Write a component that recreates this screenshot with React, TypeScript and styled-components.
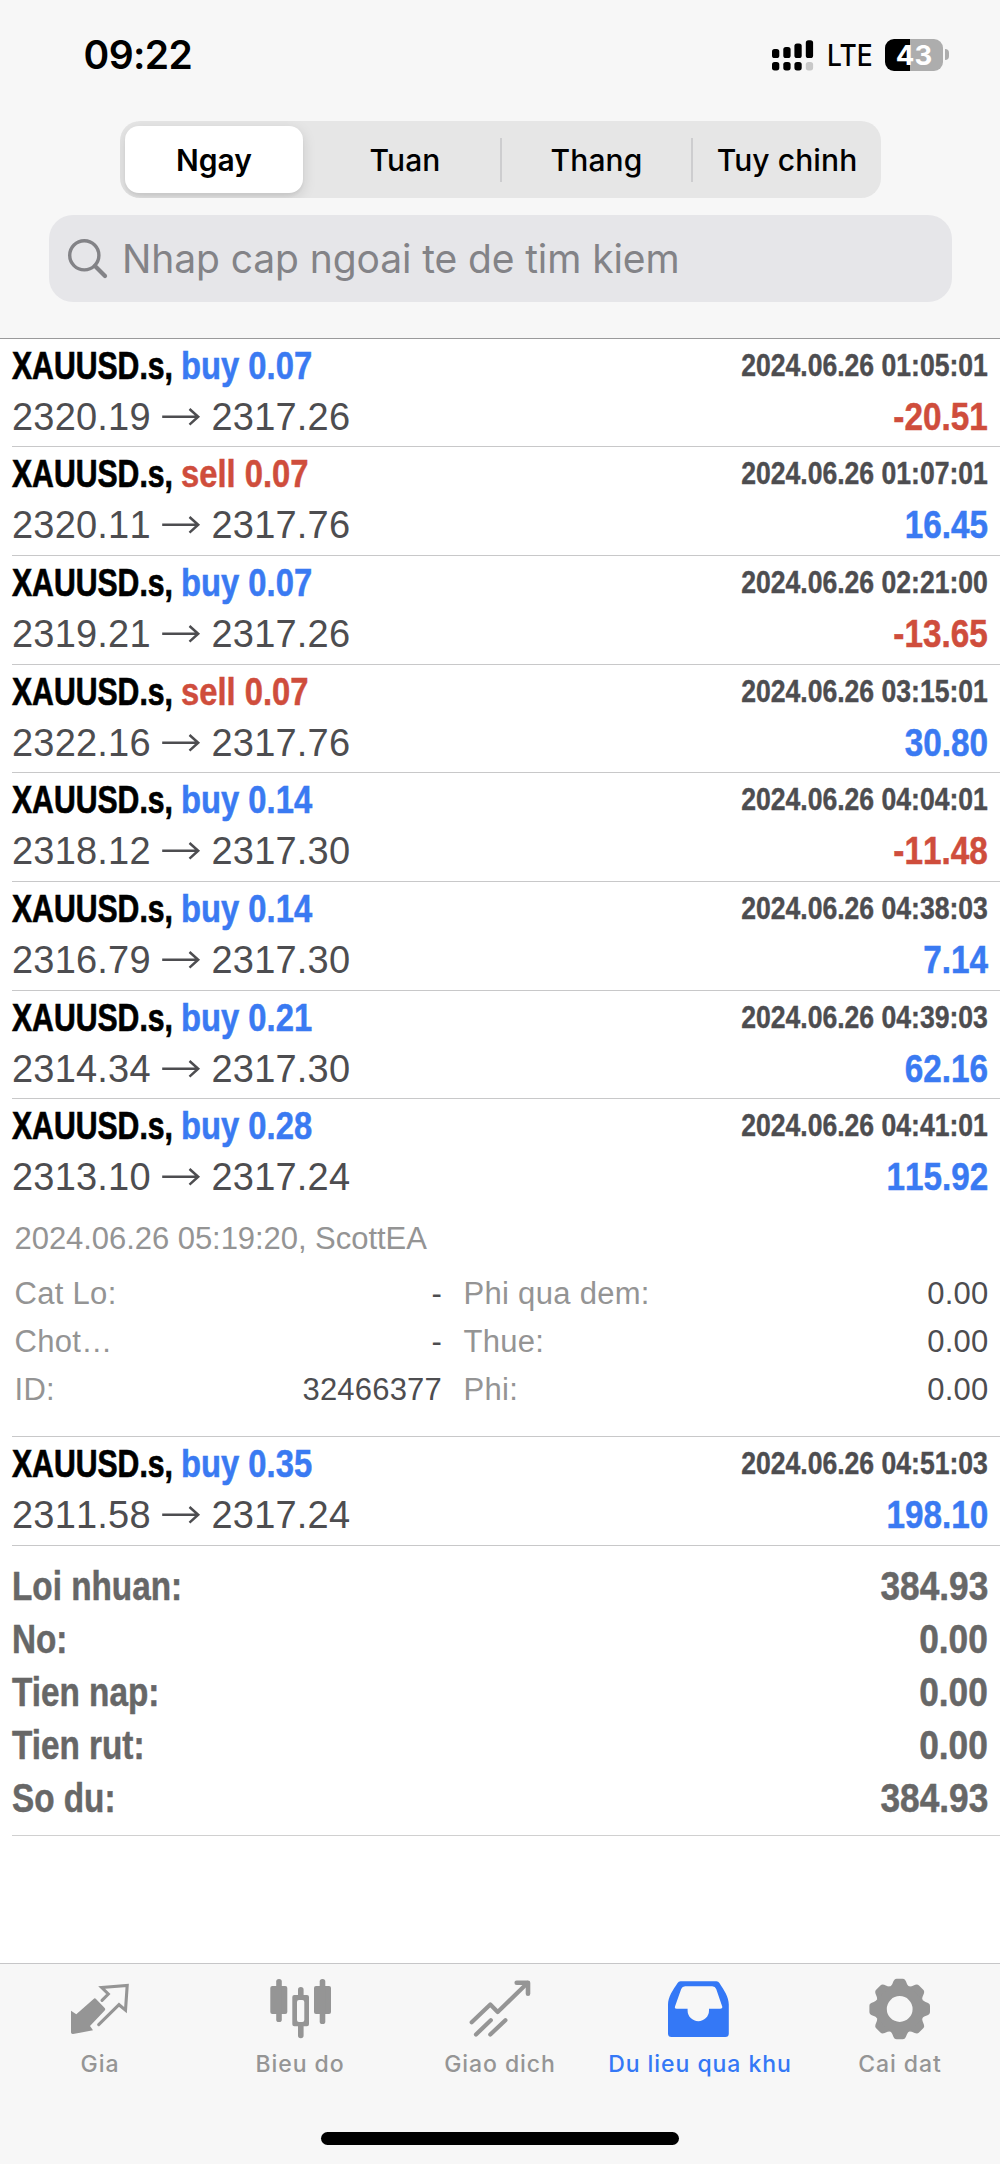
import React from "react";
import styled, { createGlobalStyle } from "styled-components";

const UI = `Inter, "Liberation Sans", sans-serif`;
const TEXT = `"Liberation Sans", Arial, sans-serif`;
const BLUE = "#3a7af2";
const RED = "#cf4d3c";
const INK = "#4d4d50";
const GREY = "#949494";

const GlobalStyle = createGlobalStyle`
  * { box-sizing: border-box; }
  body { margin: 0; background: #fff; }
`;

const Screen = styled.div`
  width: 1000px;
  height: 2164px;
  display: flex;
  flex-direction: column;
  background: #fff;
  font-family: ${TEXT};
  overflow: hidden;
  white-space: nowrap;
`;

const Header = styled.header`
  height: 339px;
  flex: none;
  display: flex;
  flex-direction: column;
  align-items: center;
  background: #f7f7f7;
  border-bottom: 1px solid #9a9a9b;
  font-family: ${UI};
`;

const StatusBar = styled.div`
  width: 100%;
  height: 109px;
  margin-bottom: 12px;
  flex: none;
  display: flex;
  align-items: center;
  justify-content: space-between;
  padding: 0 51px 0 83.5px;
`;

const Clock = styled.span`
  font-size: 39px;
  font-weight: 600;
  letter-spacing: -0.6px;
  line-height: 48px;
  color: #000;
`;

const StatusIcons = styled.div`
  display: flex;
  align-items: center;
`;

const Network = styled.span`
  width: 46px;
  margin: 1px 12px 0 13px;
  font-size: 30px;
  font-weight: 500;
  line-height: 36px;
  transform: scaleX(0.88);
  transform-origin: left;
`;

const Battery = styled.div`
  display: flex;
  align-items: center;
  gap: 2px;
`;

const BatteryBody = styled.div`
  width: 58px;
  height: 32px;
  border-radius: 9px;
  background: linear-gradient(90deg, #000 43%, #adadad 43%);
  color: #fff;
  font-size: 27.5px;
  font-weight: 700;
  line-height: 32px;
  text-align: center;
`;

const BatteryTip = styled.div`
  width: 4px;
  height: 11px;
  border-radius: 0 4px 4px 0;
  background: #adadad;
`;

const Segmented = styled.div`
  width: 761px;
  height: 77px;
  flex: none;
  display: grid;
  grid-template-columns: 185px 190px 191px 190px;
  align-items: center;
  padding-left: 5px;
  border-radius: 20px;
  background: #e6e6e6;
  overflow: hidden;
`;

const Segment = styled.div<{ $active?: boolean; $divided?: boolean }>`
  height: ${(p) => (p.$active ? 67 : 44)}px;
  line-height: ${(p) => (p.$active ? 68 : 45)}px;
  margin-right: ${(p) => (p.$active ? 7 : 0)}px;
  padding-left: 1px;
  border-left: ${(p) => (p.$divided ? "2px solid #cdcdcf" : "0")};
  border-radius: ${(p) => (p.$active ? 14 : 0)}px;
  background: ${(p) => (p.$active ? "#fff" : "transparent")};
  box-shadow: ${(p) => (p.$active ? "0 4px 14px rgba(0,0,0,.13), 0 3px 3px rgba(0,0,0,.04)" : "none")};
  font-size: 30px;
  font-weight: ${(p) => (p.$active ? 600 : 500)};
  letter-spacing: ${(p) => (p.$active ? 0 : 0.1)}px;
  text-align: center;
  color: #000;
`;

const Search = styled.div`
  width: 903px;
  height: 87px;
  margin-top: 17px;
  flex: none;
  display: flex;
  align-items: center;
  gap: 13.5px;
  padding-left: 18px;
  border-radius: 24px;
  background: #e6e6e9;
  color: #838387;
  font-size: 39px;
  line-height: 48px;
  letter-spacing: -0.1px;
`;

const List = styled.main`
  flex: 1;
  margin-left: 12px;
`;

const Deal = styled.section<{ $height: number }>`
  height: ${(p) => p.$height}px;
  padding: 2px 12px 0 0;
  border-bottom: 1px solid #c8c8c9;
`;

const Line = styled.div`
  height: 51px;
  display: flex;
  line-height: 51px;
  font-size: 38px;
`;

const Symbol = styled.span`
  width: 168.6px;
  font-weight: 700;
  color: #000;
  -webkit-text-stroke: 0.7px;
  transform: scaleX(0.794);
  transform-origin: left;
`;

const Side = styled.span<{ $color: string }>`
  flex: 1;
  font-weight: 700;
  color: ${(p) => p.$color};
  -webkit-text-stroke: 0.5px;
  transform: scaleX(0.862);
  transform-origin: left;
`;

const Time = styled.span`
  font-size: 31px;
  line-height: 49px;
  font-weight: 700;
  font-kerning: none;
  color: ${INK};
  -webkit-text-stroke: 0.4px;
  transform: scaleX(0.857);
  transform-origin: right;
`;

const Price = styled.span`
  width: 138px;
  font-kerning: none;
  letter-spacing: 0.2px;
  color: ${INK};
`;

const Arrow = styled.svg`
  width: 61.5px;
  height: 51px;
  flex: none;
  fill: none;
  stroke: ${INK};
  stroke-width: 2.5;
`;

const Profit = styled.span<{ $color: string }>`
  margin-left: auto;
  font-weight: 700;
  font-kerning: none;
  color: ${(p) => p.$color};
  -webkit-text-stroke: 0.5px;
  transform: scaleX(0.876);
  transform-origin: right;
`;

const Details = styled.div`
  padding: 12px 0 0 2.5px;
  font-size: 31px;
  line-height: 48.4px;
  color: ${GREY};
`;

const Comment = styled.div`
  margin-bottom: 6px;
  letter-spacing: -0.05px;
`;

const DetailGrid = styled.div`
  display: grid;
  grid-template-columns: 427.5px 525px;
  column-gap: 21.5px;
`;

const DetailCell = styled.div`
  display: flex;
  justify-content: space-between;
  letter-spacing: 0.3px;
`;

const DetailValue = styled.span`
  letter-spacing: 0.2px;
  color: ${INK};
`;

const Summary = styled.section`
  height: 290px;
  padding: 14px 12px 0 0;
  border-bottom: 1px solid #d0d0d0;
  color: #676767;
  font-size: 40px;
  font-weight: 700;
  line-height: 53px;
  -webkit-text-stroke: 0.5px;
`;

const SummaryRow = styled.div`
  display: flex;
  justify-content: space-between;
`;

const SummaryLabel = styled.span`
  transform: scaleX(0.832);
  transform-origin: left;
`;

const SummaryValue = styled.span`
  transform: scaleX(0.882);
  transform-origin: right;
`;

const TabBar = styled.nav`
  height: 201px;
  flex: none;
  display: grid;
  grid-template-columns: repeat(5, 200px);
  grid-template-rows: 168px 13px;
  border-top: 1px solid #c6c6c8;
  background: #f7f7f7;
`;

const Tab = styled.div<{ $active?: boolean }>`
  display: flex;
  flex-direction: column;
  align-items: center;
  padding-top: 12px;
  color: ${(p) => (p.$active ? "#3478f6" : "#959595")};
  font-family: ${UI};
  font-size: 23px;
  font-weight: 500;
  letter-spacing: 0.95px;
  line-height: 28px;
`;

const TabIcon = styled.svg`
  width: 64px;
  height: 64px;
  margin-bottom: 10px;
  flex: none;
`;

const HomeIndicator = styled.div`
  grid-column: 1 / -1;
  justify-self: center;
  width: 358px;
  height: 13px;
  border-radius: 7px;
  background: #000;
`;

type DealData = { side: "buy" | "sell"; lot: string; open: string; close: string; time: string; profit: string };

const deals: DealData[] = [
  { side: "buy", lot: "0.07", open: "2320.19", close: "2317.26", time: "01:05:01", profit: "-20.51" },
  { side: "sell", lot: "0.07", open: "2320.11", close: "2317.76", time: "01:07:01", profit: "16.45" },
  { side: "buy", lot: "0.07", open: "2319.21", close: "2317.26", time: "02:21:00", profit: "-13.65" },
  { side: "sell", lot: "0.07", open: "2322.16", close: "2317.76", time: "03:15:01", profit: "30.80" },
  { side: "buy", lot: "0.14", open: "2318.12", close: "2317.30", time: "04:04:01", profit: "-11.48" },
  { side: "buy", lot: "0.14", open: "2316.79", close: "2317.30", time: "04:38:03", profit: "7.14" },
  { side: "buy", lot: "0.21", open: "2314.34", close: "2317.30", time: "04:39:03", profit: "62.16" },
  { side: "buy", lot: "0.28", open: "2313.10", close: "2317.24", time: "04:41:01", profit: "115.92" },
  { side: "buy", lot: "0.35", open: "2311.58", close: "2317.24", time: "04:51:03", profit: "198.10" },
];

const EXPANDED = 7;

const details = [
  ["Cat Lo:", "-"],
  ["Phi qua dem:", "0.00"],
  ["Chot…", "-"],
  ["Thue:", "0.00"],
  ["ID:", "32466377"],
  ["Phi:", "0.00"],
];

const totals = [
  ["Loi nhuan:", "384.93"],
  ["No:", "0.00"],
  ["Tien nap:", "0.00"],
  ["Tien rut:", "0.00"],
  ["So du:", "384.93"],
];

const SignalIcon = () => (
  <svg width="42" height="32" viewBox="0 0 42 32">
    <rect x="0" y="10" width="7.3" height="9" rx="2.6" />
    <rect x="11.3" y="8" width="7.3" height="11" rx="2.6" />
    <rect x="22.4" y="4.5" width="7.3" height="14.5" rx="2.6" />
    <rect x="33.8" y="1.2" width="7.3" height="17.8" rx="2.6" />
    <rect x="0" y="23" width="7.3" height="8.4" rx="2.6" />
    <rect x="11.3" y="23" width="7.3" height="8.4" rx="2.6" />
    <rect x="22.4" y="23" width="7.3" height="8.4" rx="2.6" />
    <rect x="33.8" y="23" width="7.3" height="8.4" rx="2.6" fill="#c8c8c8" />
  </svg>
);

const SearchIcon = () => (
  <svg width="42" height="42" viewBox="0 0 42 42" fill="none" stroke="#838387" strokeLinecap="round">
    <circle cx="17.3" cy="17.3" r="14.6" strokeWidth="3.4" />
    <path d="M28 28 L38 38" strokeWidth="4.2" />
  </svg>
);

const GearTooth = "M-9.4,-22.6 C-6.2,-24.6 -7,-30.3 -3,-30.3 H3 C7,-30.3 6.2,-24.6 9.4,-22.6 Z";

const tabs = [
  {
    label: "Gia",
    icon: (
      <>
        <path
          d="M28 22.9 L36.7 32 Q37.8 33.3 36.7 34.5 L22 50 L25 54.3 L5 58.1 Q3 58.3 3 56.3 V34.7 L8.3 38.3 L25.6 22.9 Q26.8 21.8 28 22.9 Z"
          fill="currentColor"
        />
        <path
          d="M34 24.3 L40.3 18 L33.7 11.5 L59.2 9.4 L57.5 34.2 L51 28.7 L30.7 48.7"
          fill="none"
          stroke="currentColor"
          strokeWidth="3.1"
          strokeLinecap="round"
        />
      </>
    ),
  },
  {
    label: "Bieu do",
    icon: (
      <g fill="currentColor">
        <rect x="2.3" y="10" width="17" height="28" rx="2" />
        <rect x="8.2" y="3" width="5.6" height="43" rx="2.6" />
        <path
          fillRule="evenodd"
          d="M26.3 19 H39 Q41 19 41 21 V48.3 Q41 50.3 39 50.3 H26.3 Q24.3 50.3 24.3 48.3 V21 Q24.3 19 26.3 19 Z M31 24 Q29 24 29 26 V44 Q29 46 31 46 H34.3 Q36.3 46 36.3 44 V26 Q36.3 24 34.3 24 Z"
        />
        <path d="M30 20 V13.8 Q30 11 32.8 11 Q35.6 11 35.6 13.8 V20 Z M30 50 V59.5 Q30 62.3 32.8 62.3 Q35.6 62.3 35.6 59.5 V50 Z" />
        <rect x="46" y="10" width="17" height="28" rx="2" />
        <rect x="51.7" y="3" width="5.6" height="45" rx="2.6" />
      </g>
    ),
  },
  {
    label: "Giao dich",
    icon: (
      <g fill="none" stroke="currentColor" strokeWidth="4.2" strokeLinecap="round" strokeLinejoin="round">
        <path d="M3.7 46.2 L22.3 28.5 L29.7 36 L59.5 7" />
        <path d="M48.7 6.7 H60 V17.7" strokeWidth="4.6" />
        <path d="M8 58.5 L22.8 44.2 M22.3 58.5 L37.4 44.2" />
      </g>
    ),
  },
  {
    label: "Du lieu qua khu",
    active: true,
    icon: (
      <path
        fill="currentColor"
        fillRule="evenodd"
        d="M12.5 5.3 H48.5 Q50.4 5.3 51.4 7 C56 14 60.8 21 60.8 28.5 V57.5 Q60.8 61 57.3 61 H3.5 Q0 61 0 57.5 V28.5 C0 21 4.8 14 9.6 7 Q10.6 5.3 12.5 5.3 Z M17.2 10.3 Q14.2 10.3 13.2 13 L7 30.5 Q6.3 32.8 8.8 32.8 H19.6 V34.5 A10.7 10.7 0 0 0 41 34.5 V32.8 H52.3 Q54.9 32.8 54.2 30.5 L48.2 13 Q47.2 10.3 44.2 10.3 Z"
      />
    ),
  },
  {
    label: "Cai dat",
    icon: (
      <g transform="translate(31.7 33)" fill="currentColor">
        <circle r="18.7" fill="none" stroke="currentColor" strokeWidth="11.6" />
        {[0, 45, 90, 135, 180, 225, 270, 315].map((a) => (
          <path key={a} d={GearTooth} transform={`rotate(${a})`} />
        ))}
      </g>
    ),
  },
];

export default function App() {
  return (
    <>
      <GlobalStyle />
      <Screen>
        <Header>
          <StatusBar>
            <Clock>09:22</Clock>
            <StatusIcons>
              <SignalIcon />
              <Network>LTE</Network>
              <Battery>
                <BatteryBody>43</BatteryBody>
                <BatteryTip />
              </Battery>
            </StatusIcons>
          </StatusBar>
          <Segmented>
            <Segment $active>Ngay</Segment>
            <Segment>Tuan</Segment>
            <Segment $divided>Thang</Segment>
            <Segment $divided>Tuy chinh</Segment>
          </Segmented>
          <Search>
            <SearchIcon />
            Nhap cap ngoai te de tim kiem
          </Search>
        </Header>

        <List>
          {deals.map((d, i) => (
            <Deal key={d.time} $height={i === EXPANDED ? 338 : i === 0 ? 108.3 : 108.67}>
              <Line>
                <Symbol>XAUUSD.s,</Symbol>
                <Side $color={d.side === "buy" ? BLUE : RED}>
                  {d.side} {d.lot}
                </Side>
                <Time>2024.06.26 {d.time}</Time>
              </Line>
              <Line>
                <Price>{d.open}</Price>
                <Arrow viewBox="0 0 61.5 51">
                  <path d="M12.2 24.8 H48.2 M39.5 17 L48.2 24.8 L39.5 32.6" />
                </Arrow>
                <Price>{d.close}</Price>
                <Profit $color={d.profit.startsWith("-") ? RED : BLUE}>{d.profit}</Profit>
              </Line>
              {i === EXPANDED && (
                <Details>
                  <Comment>2024.06.26 05:19:20, ScottEA</Comment>
                  <DetailGrid>
                    {details.map(([label, value]) => (
                      <DetailCell key={label}>
                        <span>{label}</span>
                        <DetailValue>{value}</DetailValue>
                      </DetailCell>
                    ))}
                  </DetailGrid>
                </Details>
              )}
            </Deal>
          ))}
          <Summary>
            {totals.map(([label, value]) => (
              <SummaryRow key={label}>
                <SummaryLabel>{label}</SummaryLabel>
                <SummaryValue>{value}</SummaryValue>
              </SummaryRow>
            ))}
          </Summary>
        </List>

        <TabBar>
          {tabs.map((t) => (
            <Tab key={t.label} $active={t.active}>
              <TabIcon viewBox="0 0 64 64">{t.icon}</TabIcon>
              {t.label}
            </Tab>
          ))}
          <HomeIndicator />
        </TabBar>
      </Screen>
    </>
  );
}
